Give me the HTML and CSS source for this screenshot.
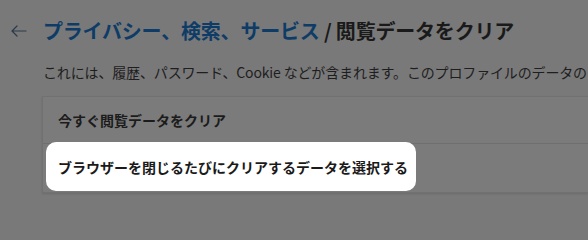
FILE: index.html
```html
<!DOCTYPE html>
<html lang="ja">
<head>
<meta charset="utf-8">
<title>閲覧データをクリア</title>
<link rel="stylesheet" href="styles.css">
</head>
<body>
<div class="page">
  <header class="header">
    <span class="back" aria-label="戻る">
      <svg width="16" height="12" viewBox="0 0 16 12"><path d="M6 1 L1 6 L6 11 M1 6 H15" fill="none" stroke="#2b3a4a" stroke-width="1.2" stroke-linecap="round" stroke-linejoin="round"/></svg>
    </span>
    <h1 class="title"><span class="crumb">プライバシー、検索、サービス</span><span class="sep"> / </span><span class="current">閲覧データをクリア</span></h1>
  </header>
  <p class="desc">これには、履歴、パスワード、Cookie などが含まれます。このプロファイルのデータの</p>
  <section class="card">
    <div class="row">今すぐ閲覧データをクリア</div>
    <div class="row row-spot"><span class="spot">ブラウザーを閉じるたびにクリアするデータを選択する</span></div>
  </section>
</div>
</body>
</html>
```

FILE: styles.css
```css
html, body {
  margin: 0;
  padding: 0;
  background: #797979;
  overflow: hidden;
}
body {
  width: 588px;
  height: 211px;
  font-family: "Noto Sans CJK JP", "Noto Sans", sans-serif;
  color: #1c1c1c;
}
.page {
  display: flex;
  flex-direction: column;
  width: 588px;
  height: 211px;
  overflow: hidden;
}
.header {
  height: 62px;
  display: flex;
  align-items: center;
}
.back {
  width: 16px;
  height: 12px;
  margin-left: 11px;
  margin-right: 16px;
  display: flex;
}
.title {
  margin: 0;
  font-size: 20px;
  font-weight: 700;
  line-height: 24px;
  white-space: nowrap;
  letter-spacing: -0.2px;
}
.crumb {
  color: #0e3c67;
}
.sep, .current {
  color: #1a1a1a;
}
.desc {
  margin: 0 0 0 43px;
  font-size: 14px;
  line-height: 20px;
  white-space: nowrap;
  letter-spacing: -0.15px;
  color: #1e1e1e;
}
.card {
  margin-top: 14px;
  margin-left: 42px;
  width: 546px;
  box-sizing: border-box;
  background: #7b7b7b;
  border: 1px solid #717171;
  border-right: none;
  box-shadow: 0 1px 2px rgba(0,0,0,0.12);
}
.row {
  height: 46px;
  display: flex;
  align-items: center;
  padding-left: 15px;
  font-size: 14px;
  font-weight: 600;
  color: #1c1c1c;
  white-space: nowrap;
}
.row-spot {
  height: 48px;
  border-top: 1px solid #6f6f6f;
  padding-left: 3px;
  align-items: flex-start;
}
.spot {
  margin-top: -2px;
  height: 49px;
  display: inline-flex;
  align-items: center;
  padding: 0 8px 0 12px;
  background: #ffffff;
  border-radius: 10px;
  color: #1a1a1a;
}
```
